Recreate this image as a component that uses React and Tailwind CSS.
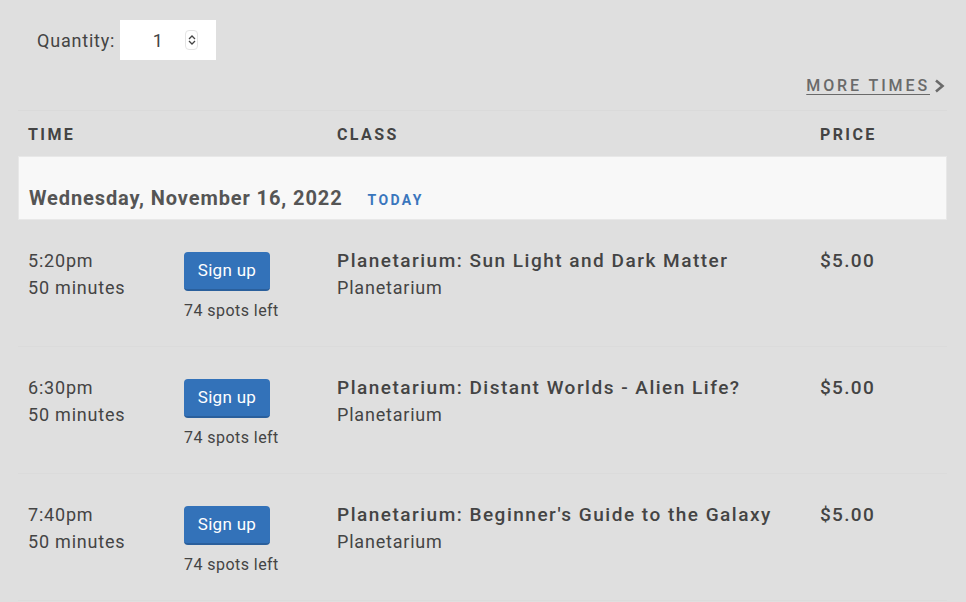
import React, { useState } from 'react';

const sessions = [
  { time: '5:20pm', title: 'Planetarium: Sun Light and Dark Matter' },
  { time: '6:30pm', title: 'Planetarium: Distant Worlds - Alien Life?' },
  { time: '7:40pm', title: "Planetarium: Beginner's Guide to the Galaxy" },
];

const App = () => {
  const [quantity, setQuantity] = useState(1);

  return (
    <div className="min-h-[602px] bg-[#dfdfdf] text-[#444] font-['Roboto','Liberation_Sans',sans-serif]">
      {/* Quantity picker */}
      <div className="flex items-center pt-[20px] pl-[37px] h-[60px]">
        <span className="text-[18px] tracking-[0.8px] mr-[5px]">Quantity:</span>
        <div className="flex items-center w-[96px] h-[40px] bg-white">
          <span className="flex-1 text-center text-[18px] pl-[10px]">{quantity}</span>
          <div className="flex flex-col items-center justify-center w-[13px] h-[20px] mr-[18px] rounded-[4px] border border-[#e4e4e4]">
            <button onClick={() => setQuantity(quantity + 1)} className="leading-none">
              <svg width="8" height="6" viewBox="0 0 8 6"><path d="M1 5 L4 2 L7 5" fill="none" stroke="#444" strokeWidth="1.3" /></svg>
            </button>
            <button onClick={() => setQuantity(Math.max(1, quantity - 1))} className="leading-none">
              <svg width="8" height="6" viewBox="0 0 8 6"><path d="M1 1 L4 4 L7 1" fill="none" stroke="#444" strokeWidth="1.3" /></svg>
            </button>
          </div>
        </div>
      </div>

      <div className="px-[18px] pr-[19px]">
        {/* More times link */}
        <div className="flex justify-end items-center h-[50px] pt-[2px] pr-[1px]">
          <a href="#" className="text-[16px] font-medium tracking-[2.9px] text-[#6a6a6a] underline underline-offset-[3px]">MORE TIMES</a>
          <svg width="13" height="14" viewBox="0 0 13 14" className="ml-[3px]"><path d="M3 1.5 L9.5 7 L3 12.5" fill="none" stroke="#6a6a6a" strokeWidth="2.6" /></svg>
        </div>

        {/* Table header */}
        <div className="grid grid-cols-[309px_483px_1fr] items-center h-[46px] pt-[2px] border-t border-[#dadada] text-[16px] font-bold tracking-[2.4px] text-[#444]">
          <div className="pl-[10px]">TIME</div>
          <div className="pl-[10px]">CLASS</div>
          <div className="pl-[10px]">PRICE</div>
        </div>

        {/* Date band */}
        <div className="flex items-end h-[64px] pb-[6px] pl-[10px] bg-[#f8f8f8] border border-[#e8e8e8]">
          <span className="text-[20px] font-bold tracking-[0.9px] text-[#555]">Wednesday, November 16, 2022</span>
          <span className="ml-[25px] mb-[2px] text-[14px] font-bold tracking-[2.4px] text-[#3a76bd]">TODAY</span>
        </div>

        {/* Sessions */}
        {sessions.map((s) => (
          <div key={s.time} className="grid grid-cols-[156px_153px_483px_1fr] h-[127px] pt-[27px] border-b border-[#dbdbdb]">
            <div className="pl-[10px] text-[18px] tracking-[0.8px] leading-[27px]">
              <div>{s.time}</div>
              <div>50 minutes</div>
            </div>
            <div className="pl-[10px]">
              <button className="mt-[5px] w-[86px] h-[39px] rounded-[4px] bg-[#3372b9] border-b-2 border-[#2a5f9c] text-white text-[17px] tracking-[0.3px]">Sign up</button>
              <div className="mt-[8px] text-[16px] tracking-[0.45px] leading-[24px] text-[#444]">74 spots left</div>
            </div>
            <div className="pl-[10px] leading-[27px]">
              <div className="text-[19px] font-medium tracking-[1.5px]">{s.title}</div>
              <div className="text-[18px] tracking-[0.8px]">Planetarium</div>
            </div>
            <div className="pl-[10px] text-[19px] font-medium tracking-[1.3px] leading-[27px]">$5.00</div>
          </div>
        ))}
      </div>
    </div>
  );
};

export default App;
